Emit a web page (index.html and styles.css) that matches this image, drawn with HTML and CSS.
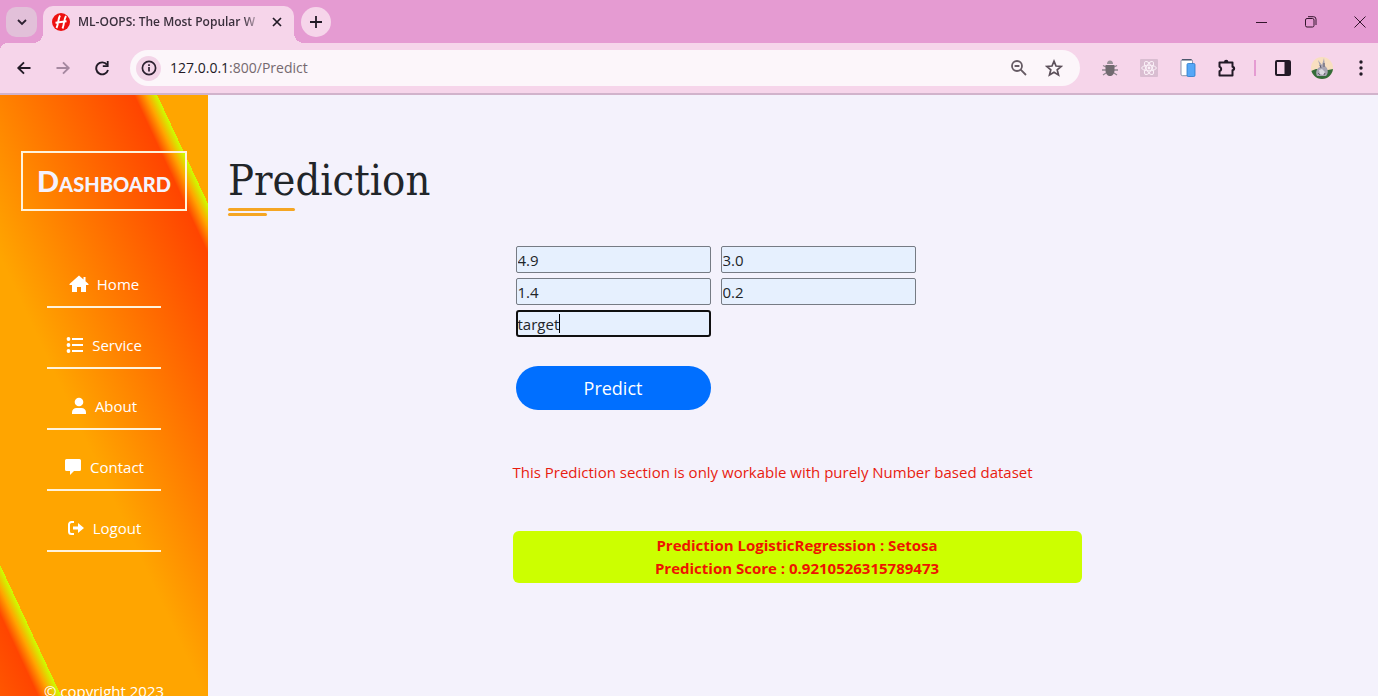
FILE: index.html
```html
<!DOCTYPE html>
<html lang="en">
<head>
<meta charset="utf-8">
<title>ML-OOPS</title>
<link rel="stylesheet" href="styles.css">
</head>
<body>
<header class="tabstrip">
  <button class="tab-search" aria-label="Search tabs"><svg width="12" height="12" viewBox="0 0 12 12" fill="none" stroke="#2c2030" stroke-width="1.8"><path d="M2 4l4 4 4-4"/></svg></button>
  <div class="tab">
    <svg class="favicon" width="18" height="18" viewBox="0 0 18 18"><circle cx="9" cy="9" r="9" fill="#ee1010"/><path d="M8 2.500C6 6 6.500 11 4.500 15M14 3C11.500 7 12.500 11 10.500 15.500M3.500 9.700L14.500 8.300" stroke="#fff" stroke-width="1.900" fill="none"/></svg>
    <span class="tab-title">ML-OOPS: The Most Popular W</span>
    <button class="tab-close" aria-label="Close tab"><svg width="10" height="10" viewBox="0 0 10 10" stroke="#221a26" stroke-width="1.700"><path d="M1 1l8 8M9 1l-8 8"/></svg></button>
  </div>
  <button class="tab-new" aria-label="New tab"><svg width="12" height="12" viewBox="0 0 12 12" stroke="#221a26" stroke-width="1.800"><path d="M6 0v12M0 6h12"/></svg></button>
  <div class="window-controls">
    <button aria-label="Minimize"><svg width="12" height="12" viewBox="0 0 12 12" stroke="#33152c" stroke-width="1"><path d="M0 6.500h11"/></svg></button>
    <button aria-label="Restore"><svg width="12" height="12" viewBox="0 0 12 12" stroke="#33152c" fill="none"><rect x=".5" y="2.500" width="8.500" height="8.500" rx="1.500"/><path d="M3 .7h5.500a2.500 2.500 0 0 1 2.500 2.500V9"/></svg></button>
    <button aria-label="Close window"><svg width="12" height="12" viewBox="0 0 12 12" stroke="#33152c" stroke-width="1"><path d="M.5.5l11 11M11.500.5l-11 11"/></svg></button>
  </div>
</header>
<nav class="toolbar" aria-label="Browser toolbar">
  <div class="history">
    <button aria-label="Back"><svg width="16" height="16" viewBox="0 0 16 16" fill="none" stroke="#221a26" stroke-width="1.900"><path d="M14.500 8H2.500M8 2.300L2.300 8 8 13.700"/></svg></button>
    <button aria-label="Forward"><svg width="16" height="16" viewBox="0 0 16 16" fill="none" stroke="#a588a0" stroke-width="1.900"><path d="M1.500 8h12M8 2.300L13.700 8 8 13.700"/></svg></button>
    <button aria-label="Reload"><svg width="16" height="16" viewBox="0 0 16 16"><path d="M13 4.700A6 6 0 1 0 14 10" fill="none" stroke="#221a26" stroke-width="1.900"/><path d="M14.600 1v6H8.800V5.300h4V1z" fill="#221a26"/></svg></button>
  </div>
  <div class="omnibox">
    <button class="site-info" aria-label="Site information"><svg width="16" height="16" viewBox="0 0 16 16" fill="none" stroke="#2c2030" stroke-width="1.700"><circle cx="8" cy="8" r="6.600"/><path d="M8 7v4.500M8 4.200v1.700"/></svg></button>
    <div class="url">127.0.0.1<span>:800/Predict</span></div>
    <button aria-label="Zoom"><svg width="18" height="18" viewBox="0 0 18 18" fill="none" stroke="#665b64" stroke-width="1.800"><circle cx="7" cy="7" r="5"/><path d="M10.700 10.700L16 16M4.600 7h4.800"/></svg></button>
    <button aria-label="Bookmark"><svg width="18" height="18" viewBox="0 0 18 18" fill="none" stroke="#5c505a" stroke-width="1.700"><path d="M9 2.200l2 4.800 5.200.4-4 3.400 1.300 5.100L9 13.200l-4.500 2.700 1.300-5.100-4-3.400L7 7z"/></svg></button>
  </div>
  <div class="extensions">
    <button aria-label="Debugger"><svg width="18" height="18" viewBox="0 0 18 18"><path d="M2 6.500l3 1.500M1 11h4M2 16l3-2M16 6.500l-3 1.500M17 11h-4M16 16l-3-2" stroke="#8f858e" stroke-width="1.300" fill="none"/><path d="M6 5a3 3.500 0 0 1 6 0z" fill="#9a9199"/><path d="M4.500 6h9v5c0 8-9 8-9 0z" fill="#716a70"/></svg></button>
    <button aria-label="React tools"><svg width="18" height="18" viewBox="0 0 18 18"><rect width="18" height="18" rx="1" fill="#d9bdd1"/><g fill="none" stroke="#fbf1f8" stroke-width="1"><ellipse cx="9" cy="9" rx="7.300" ry="2.800"/><ellipse cx="9" cy="9" rx="7.300" ry="2.800" transform="rotate(60 9 9)"/><ellipse cx="9" cy="9" rx="7.300" ry="2.800" transform="rotate(120 9 9)"/></g><circle cx="9" cy="9" r="1.400" fill="#fbf1f8"/></svg></button>
    <button aria-label="Mobile simulator"><svg width="18" height="18" viewBox="0 0 18 18"><rect x="2" y=".7" width="11.500" height="16" rx="1.500" fill="#fff" stroke="#6d7d96" stroke-width=".8"/><path d="M3 .8h9.500" stroke="#38455a" stroke-width="1.200"/><rect x="8" y="4.500" width="8" height="13" rx="1.200" fill="#55a7f7" stroke="#2779c9" stroke-width=".8"/></svg></button>
    <button aria-label="Extensions"><svg width="20" height="20" viewBox="0 0 20 20"><path d="M2.500 4.500h13v4.200a1.800 1.800 0 0 1 0 3.500v5.300h-13v-4.200a2.400 2.400 0 0 0 0-4.600z" fill="none" stroke="#221a26" stroke-width="2" stroke-linejoin="round"/><path d="M7 4a2.200 2.200 0 0 1 4.400 0zM16 8.300a2.200 2.200 0 0 1 0 4.400z" fill="#221a26"/></svg></button>
    <span class="divider"></span>
    <button aria-label="Side panel"><svg width="18" height="18" viewBox="0 0 18 18"><rect x="2" y="2" width="14" height="14" rx="1" fill="none" stroke="#221a26" stroke-width="2"/><path d="M10.500 2H16v14h-5.500z" fill="#221a26"/></svg></button>
    <button aria-label="Profile"><svg width="22" height="22" viewBox="0 0 22 22"><clipPath id="face"><circle cx="11" cy="11" r="11"/></clipPath><g clip-path="url(#face)"><path d="M0 0h22v22H0z" fill="#f8dfc0"/><path d="M0 14l5-2 12 1 5-1v10H0z" fill="#346b39"/><path d="M6 19c-2-4 0-8 3-9L7 3l4 5 2-7 1 8c3 2 4 7 1 10z" fill="#a8a5b2"/><path d="M8 13l3-1 3 3-2 3-3-1z" fill="#dcdbe1"/><path d="M9 8l1 3M13 6v4M7 16l2 2M14 16l-1 2" stroke="#625e6c" fill="none"/></g></svg></button>
    <button aria-label="Menu"><svg width="18" height="18" viewBox="0 0 18 18" fill="#221a26"><circle cx="9" cy="3" r="1.700"/><circle cx="9" cy="9" r="1.700"/><circle cx="9" cy="15" r="1.700"/></svg></button>
  </div>
</nav>
<div class="page">
  <aside class="sidebar">
    <div class="brand">Dashboard</div>
    <nav class="menu" aria-label="Main">
      <a href="#"><svg width="20" height="18" viewBox="0 0 20 18"><path d="M10 .5L.5 9v1H3v7h5v-5h4v5h5v-7h2.500V9L16.500 6.200V2h-2v2.500z"/></svg>Home</a>
      <a href="#"><svg width="18" height="18" viewBox="0 0 18 18"><circle cx="2.500" cy="3" r="1.900"/><circle cx="2.500" cy="9" r="1.900"/><circle cx="2.500" cy="15" r="1.900"/><path d="M6 2h11v2H6zM6 8h11v2H6zM6 14h11v2H6z"/></svg>Service</a>
      <a href="#"><svg width="16" height="18" viewBox="0 0 16 18"><circle cx="8" cy="5" r="4.300"/><path d="M1 17v-1.500C1 12.500 3 11 5.500 11h5c2.500 0 4.500 1.500 4.500 4.500V17z"/></svg>About</a>
      <a href="#"><svg width="18" height="18" viewBox="0 0 18 18"><path d="M2.500 1h13A1.500 1.500 0 0 1 17 2.500v9a1.500 1.500 0 0 1-1.500 1.500H10l-4 4v-4H2.500A1.500 1.500 0 0 1 1 11.500v-9A1.500 1.500 0 0 1 2.500 1z"/></svg>Contact</a>
      <a href="#"><svg width="18" height="18" viewBox="0 0 18 18"><path d="M7 3H4.500A2.500 2.500 0 0 0 2 5.500v7A2.500 2.500 0 0 0 4.500 15H7" fill="none" stroke="#fff" stroke-width="2"/><path d="M6 7.500h5V4l6 5-6 5v-3.500H6z"/></svg>Logout</a>
    </nav>
    <p class="copyright">© copyright 2023</p>
  </aside>
  <main class="content">
    <h1>Prediction</h1>
    <div class="panel">
      <form class="features">
        <input type="text" value="4.9" aria-label="Feature 1">
        <input type="text" value="3.0" aria-label="Feature 2">
        <input type="text" value="1.4" aria-label="Feature 3">
        <input type="text" value="0.2" aria-label="Feature 4">
        <div class="focused"><input type="text" value="target" aria-label="Target"><span class="caret"></span></div>
        <button class="predict" type="button">Predict</button>
      </form>
      <p class="note">This Prediction section is only workable with purely Number based dataset</p>
      <div class="result">Prediction LogisticRegression : Setosa<br>Prediction Score : 0.9210526315789473</div>
    </div>
  </main>
</div>
</body>
</html>
```
FILE: styles.css
```css
* { box-sizing: border-box; }
body {
  margin: 0;
  height: 100vh;
  display: flex;
  flex-direction: column;
  overflow: hidden;
  background: #f4f2fc;
  color: #212529;
  font: 15px/24px "Open Sans", "Noto Sans", sans-serif;
}
button { border: 0; padding: 0; background: none; font: inherit; color: inherit; display: grid; place-items: center; }
svg { display: block; flex: none; }

.tabstrip { display: flex; align-items: center; height: 43px; flex: none; background: #e59bd2; padding-left: 6px; }
.tab-search { width: 31px; height: 30px; border-radius: 10px; background: #e2c0d9; }
.tab {
  position: relative;
  align-self: flex-end;
  display: flex;
  align-items: center;
  width: 251px;
  height: 37px;
  margin-left: 6px;
  padding: 0 10px 6px 9px;
  border-radius: 10px 10px 0 0;
  background: #f6d5ea;
}
.tab::before, .tab::after { content: ""; position: absolute; bottom: 0; width: 10px; height: 10px; }
.tab::before { right: 100%; background: radial-gradient(circle at 0 0, transparent 10px, #f6d5ea 10px); }
.tab::after { left: 100%; background: radial-gradient(circle at 100% 0, transparent 10px, #f6d5ea 10px); }
.tab-title {
  flex: 1;
  margin: 0 7px 0 8px;
  white-space: nowrap;
  font-size: 12px;
  font-weight: 600;
  color: #3a2f3c;
  -webkit-mask-image: linear-gradient(90deg, #000 165px, transparent 184px);
  mask-image: linear-gradient(90deg, #000 165px, transparent 184px);
}
.tab-close { width: 14px; height: 20px; }
.tab-new { width: 30px; height: 30px; margin-left: 7px; border-radius: 50%; background: #f6d5ea; }
.window-controls { display: flex; gap: 37px; margin-left: auto; padding-right: 12px; }

.toolbar { position: relative; display: flex; align-items: center; height: 52px; flex: none; padding: 0 7px 0 16px; background: radial-gradient(circle at 8px 8px, #f6d5ea 8px, #e59bd2 8px) 0 0 / 8px 8px no-repeat, linear-gradient(#f6d5ea, #f6d5ea) 8px 0 no-repeat, linear-gradient(#f6d5ea, #f6d5ea) 0 8px no-repeat; border-bottom: 2px solid #d1b3cb; }
.history { display: flex; gap: 23px; }
.omnibox { display: flex; align-items: center; flex: 1; height: 36px; margin: 0 20px; padding: 0 17px 0 6px; border-radius: 18px; background: #fcf6fa; gap: 17px; }
.site-info { width: 25px; height: 25px; border-radius: 50%; background: #f3d5e8; }
.url { flex: 1; margin-left: -8px; font-size: 14px; color: #221a26; }
.url span { color: #75696f; }
.extensions { display: flex; align-items: center; gap: 19px; }
.extensions button { width: 20px; height: 22px; justify-content: center; }
.divider { width: 2px; height: 16px; margin: 0 -2px; background: #e59bd2; }

.page { display: flex; flex: 1; min-height: 0; }
.sidebar {
  display: flex;
  flex-direction: column;
  align-items: center;
  width: 208px;
  flex: none;
  padding-top: 56px;
  color: #fff;
  background: repeating-linear-gradient(245deg, #ccff00 46px, #ffa500 56px, #ff4500 67px, #ffa500 257px, #ffa500 387px);
}
.brand {
  display: grid;
  place-items: center;
  flex: none;
  width: 166px;
  height: 60px;
  border: 2px solid #fff3dc;
  color: #f4f2fc;
  font: 900 29px/32px Lato, sans-serif;
  font-variant: small-caps;
}
.menu { display: flex; flex-direction: column; flex: none; gap: 26px; width: 114px; margin-top: 62px; }
.menu a { display: flex; justify-content: center; align-items: center; gap: 8px; height: 35px; padding-bottom: 11px; border-bottom: 2px solid #fff3dc; color: #fff; text-decoration: none; white-space: nowrap; }
.menu svg { fill: #fff; }
.copyright { flex: none; margin: 127px 0 0; white-space: nowrap; }

.content { flex: 1; min-width: 0; padding: 57px 12px 0 20px; }
h1 { position: relative; width: max-content; margin: 0; font: 400 43px/56px "DejaVu Serif Condensed", "DejaVu Serif", serif; }
h1::before, h1::after { content: ""; position: absolute; left: 0; height: 3px; border-radius: 2px; background: #f5a623; }
h1::before { top: 56px; width: 67px; }
h1::after { top: 61px; width: 39px; }
.panel { width: 50%; margin: 38px auto 0; }
.features { display: grid; grid-template-columns: 195px 195px; gap: 5px 10px; margin-left: 3px; }
.features input { width: 100%; height: 27px; padding: 0 1px; border: 1px solid #767b84; border-radius: 2px; background: #e6f0fe; color: #212529; font: inherit; outline: 0; }
.focused { position: relative; }
.features .focused input { border: 2px solid #101010; border-radius: 3px; padding: 0; }
.caret { position: absolute; left: 43px; top: 4px; width: 1px; height: 19px; background: #000; }
.predict { grid-column: 1; height: 44px; margin-top: 24px; border-radius: 22px; background: #006fff; color: #fff; font-size: 18px; }
.note { margin: 50px 0 0; color: #e81c10; }
.result { margin-top: 47px; padding: 3px 0; border-radius: 6px; background: #ccff00; color: #ee1500; text-align: center; font-weight: 700; line-height: 23px; }
```
